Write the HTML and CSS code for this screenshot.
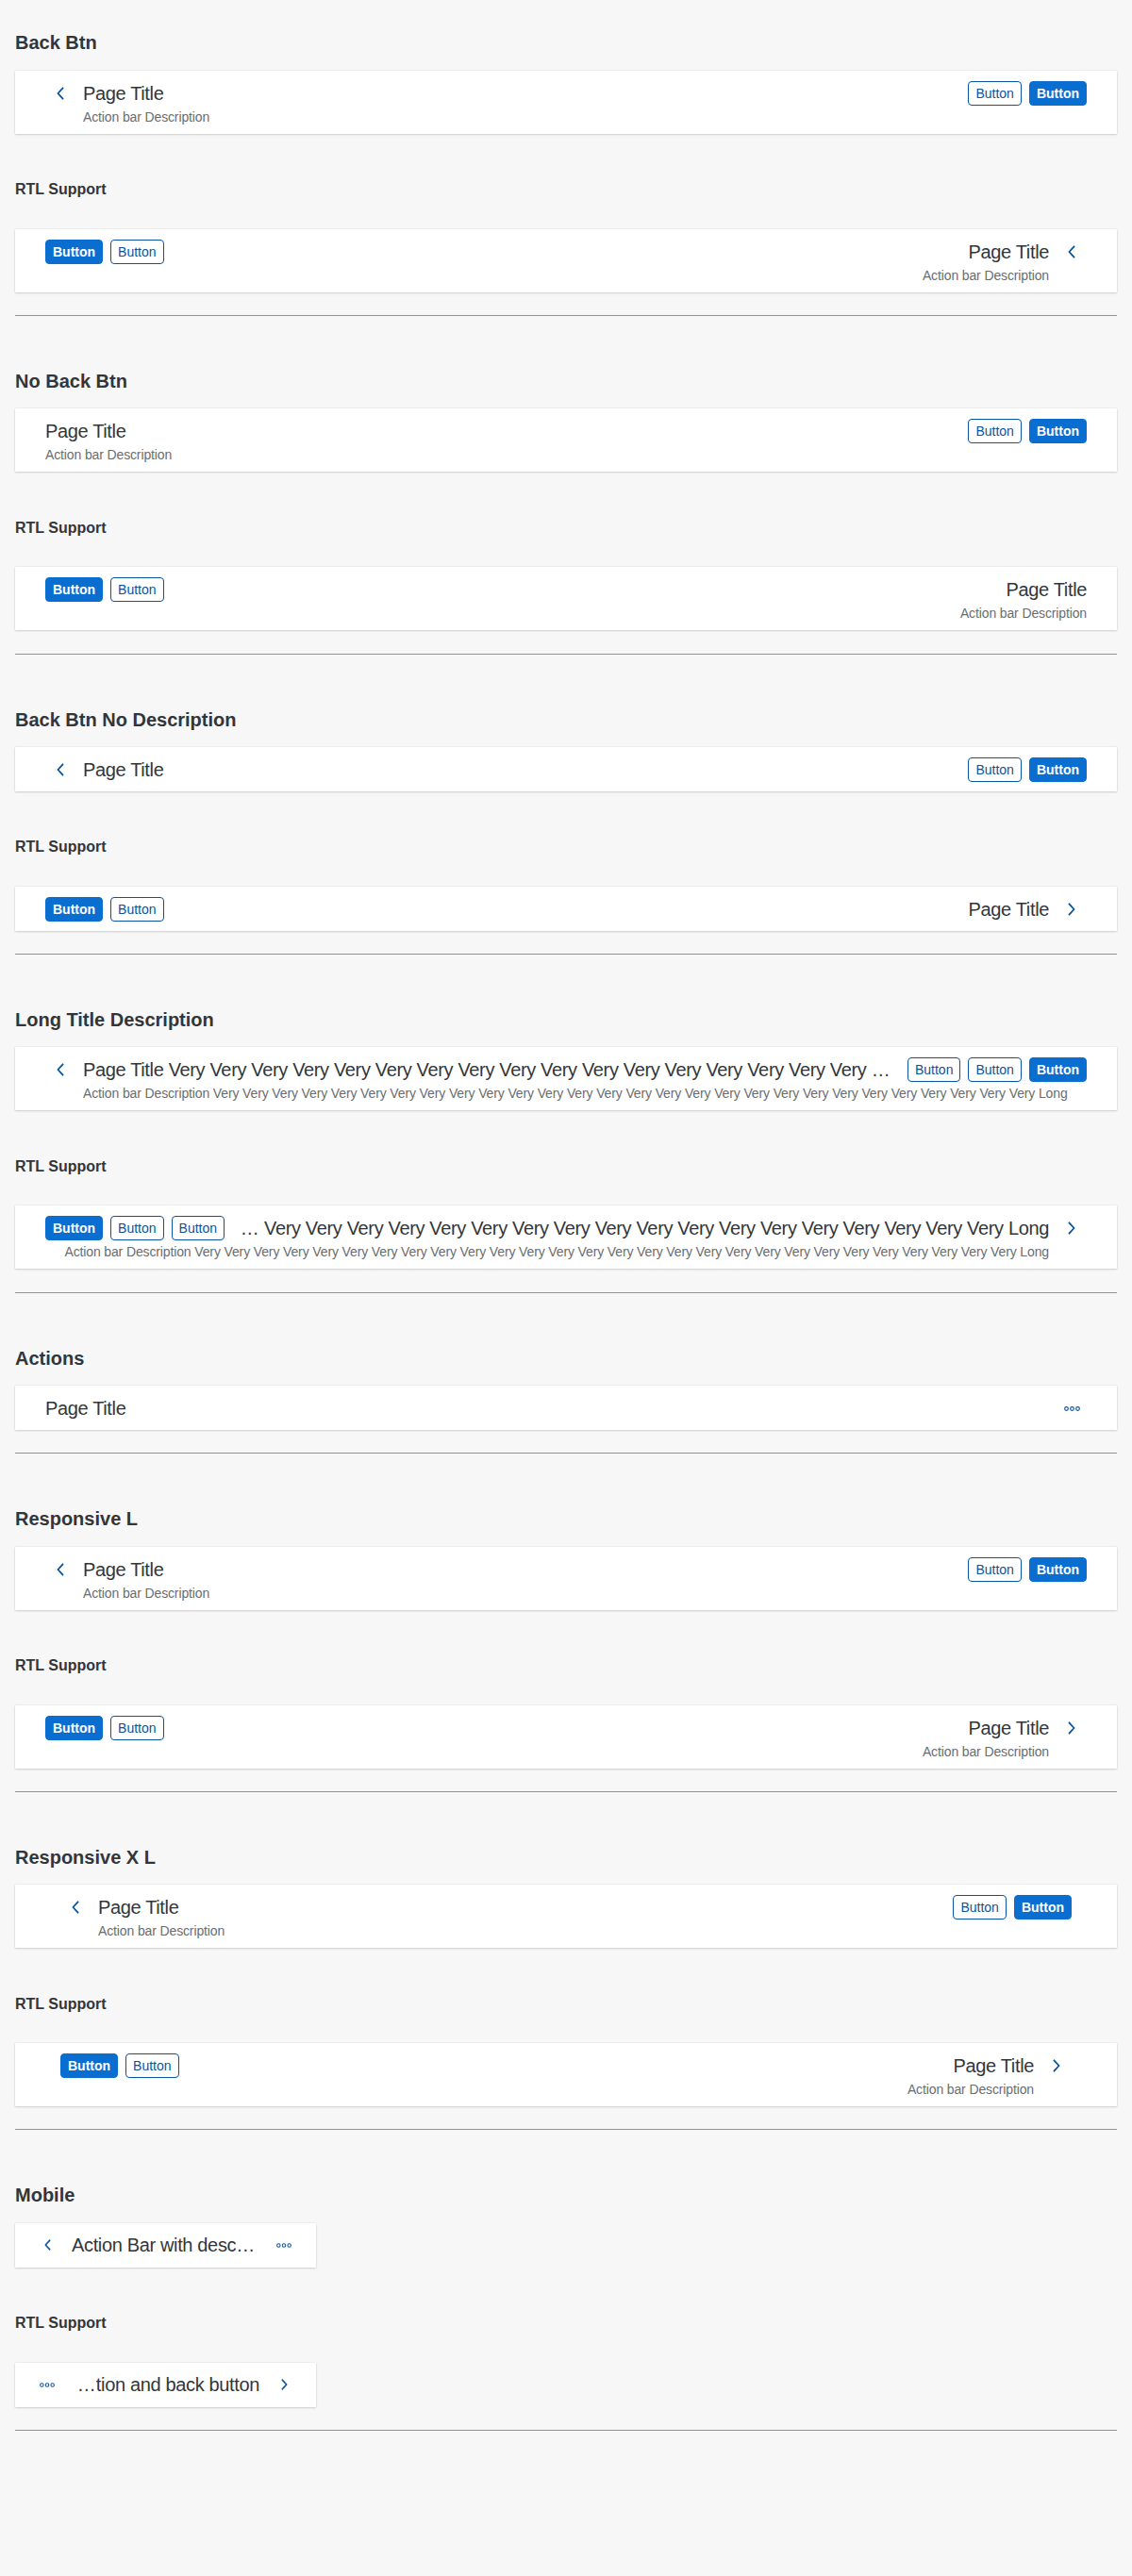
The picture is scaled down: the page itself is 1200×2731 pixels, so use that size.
FILE: index.html
```html
<!DOCTYPE html>
<html lang="en">
<head>
<meta charset="utf-8">
<title>Action Bar</title>
<link rel="stylesheet" href="styles.css">
</head>
<body>
<svg width="0" height="0" class="defs" aria-hidden="true">
  <defs>
    <symbol id="chev-left" viewBox="0 0 10 14"><polyline points="7.6,1.3 2.4,7 7.6,12.7" fill="none" stroke="currentColor" stroke-width="1.8" stroke-linecap="round" stroke-linejoin="round"/></symbol>
    <symbol id="chev-right" viewBox="0 0 10 14"><polyline points="2.4,1.3 7.6,7 2.4,12.7" fill="none" stroke="currentColor" stroke-width="1.8" stroke-linecap="round" stroke-linejoin="round"/></symbol>
    <symbol id="overflow" viewBox="0 0 17 5"><circle cx="2.5" cy="2.5" r="1.85" fill="none" stroke="currentColor" stroke-width="1.1"/><circle cx="8.5" cy="2.5" r="1.85" fill="none" stroke="currentColor" stroke-width="1.1"/><circle cx="14.5" cy="2.5" r="1.85" fill="none" stroke="currentColor" stroke-width="1.1"/></symbol>
  </defs>
</svg>

<section class="story">
  <h3 class="story-title">Back Btn</h3>
  <div class="bar">
    <div class="bar-row">
      <span class="back"><svg class="chev"><use href="#chev-left"/></svg></span>
      <span class="bar-title">Page Title</span>
      <div class="bar-actions"><span class="btn">Button</span><span class="btn btn-em">Button</span></div>
    </div>
    <div class="bar-desc indent">Action bar Description</div>
  </div>
  <h4 class="rtl-title">RTL Support</h4>
  <div class="bar" dir="rtl">
    <div class="bar-row">
      <span class="back"><svg class="chev"><use href="#chev-left"/></svg></span>
      <span class="bar-title">Page Title</span>
      <div class="bar-actions"><span class="btn">Button</span><span class="btn btn-em">Button</span></div>
    </div>
    <div class="bar-desc indent">Action bar Description</div>
  </div>
  <hr class="divider">
</section>

<section class="story">
  <h3 class="story-title">No Back Btn</h3>
  <div class="bar">
    <div class="bar-row">
      <span class="bar-title">Page Title</span>
      <div class="bar-actions"><span class="btn">Button</span><span class="btn btn-em">Button</span></div>
    </div>
    <div class="bar-desc">Action bar Description</div>
  </div>
  <h4 class="rtl-title">RTL Support</h4>
  <div class="bar" dir="rtl">
    <div class="bar-row">
      <span class="bar-title">Page Title</span>
      <div class="bar-actions"><span class="btn">Button</span><span class="btn btn-em">Button</span></div>
    </div>
    <div class="bar-desc">Action bar Description</div>
  </div>
  <hr class="divider">
</section>

<section class="story">
  <h3 class="story-title">Back Btn No Description</h3>
  <div class="bar">
    <div class="bar-row">
      <span class="back"><svg class="chev"><use href="#chev-left"/></svg></span>
      <span class="bar-title">Page Title</span>
      <div class="bar-actions"><span class="btn">Button</span><span class="btn btn-em">Button</span></div>
    </div>
  </div>
  <h4 class="rtl-title">RTL Support</h4>
  <div class="bar" dir="rtl">
    <div class="bar-row">
      <span class="back"><svg class="chev"><use href="#chev-right"/></svg></span>
      <span class="bar-title">Page Title</span>
      <div class="bar-actions"><span class="btn">Button</span><span class="btn btn-em">Button</span></div>
    </div>
  </div>
  <hr class="divider">
</section>

<section class="story">
  <h3 class="story-title">Long Title Description</h3>
  <div class="bar">
    <div class="bar-row">
      <span class="back"><svg class="chev"><use href="#chev-left"/></svg></span>
      <span class="bar-title">Page Title Very Very Very Very Very Very Very Very Very Very Very Very Very Very Very Very Very Very Very Very Very Very Very Very Very Very Very Very Long</span>
      <div class="bar-actions"><span class="btn">Button</span><span class="btn">Button</span><span class="btn btn-em">Button</span></div>
    </div>
    <div class="bar-desc indent">Action bar Description Very Very Very Very Very Very Very Very Very Very Very Very Very Very Very Very Very Very Very Very Very Very Very Very Very Very Very Very Long</div>
  </div>
  <h4 class="rtl-title">RTL Support</h4>
  <div class="bar" dir="rtl">
    <div class="bar-row">
      <span class="back"><svg class="chev"><use href="#chev-right"/></svg></span>
      <span class="bar-title">Page Title Very Very Very Very Very Very Very Very Very Very Very Very Very Very Very Very Very Very Very Very Very Very Very Very Very Very Very Very Long</span>
      <div class="bar-actions"><span class="btn">Button</span><span class="btn">Button</span><span class="btn btn-em">Button</span></div>
    </div>
    <div class="bar-desc indent">Action bar Description Very Very Very Very Very Very Very Very Very Very Very Very Very Very Very Very Very Very Very Very Very Very Very Very Very Very Very Very Long</div>
  </div>
  <hr class="divider">
</section>

<section class="story">
  <h3 class="story-title">Actions</h3>
  <div class="bar">
    <div class="bar-row">
      <span class="bar-title">Page Title</span>
      <div class="bar-actions"><span class="icon-btn"><svg class="dots"><use href="#overflow"/></svg></span></div>
    </div>
  </div>
  <hr class="divider">
</section>

<section class="story">
  <h3 class="story-title">Responsive L</h3>
  <div class="bar">
    <div class="bar-row">
      <span class="back"><svg class="chev"><use href="#chev-left"/></svg></span>
      <span class="bar-title">Page Title</span>
      <div class="bar-actions"><span class="btn">Button</span><span class="btn btn-em">Button</span></div>
    </div>
    <div class="bar-desc indent">Action bar Description</div>
  </div>
  <h4 class="rtl-title">RTL Support</h4>
  <div class="bar" dir="rtl">
    <div class="bar-row">
      <span class="back"><svg class="chev"><use href="#chev-right"/></svg></span>
      <span class="bar-title">Page Title</span>
      <div class="bar-actions"><span class="btn">Button</span><span class="btn btn-em">Button</span></div>
    </div>
    <div class="bar-desc indent">Action bar Description</div>
  </div>
  <hr class="divider">
</section>

<section class="story">
  <h3 class="story-title">Responsive X L</h3>
  <div class="bar bar-xl">
    <div class="bar-row">
      <span class="back"><svg class="chev"><use href="#chev-left"/></svg></span>
      <span class="bar-title">Page Title</span>
      <div class="bar-actions"><span class="btn">Button</span><span class="btn btn-em">Button</span></div>
    </div>
    <div class="bar-desc indent">Action bar Description</div>
  </div>
  <h4 class="rtl-title">RTL Support</h4>
  <div class="bar bar-xl" dir="rtl">
    <div class="bar-row">
      <span class="back"><svg class="chev"><use href="#chev-right"/></svg></span>
      <span class="bar-title">Page Title</span>
      <div class="bar-actions"><span class="btn">Button</span><span class="btn btn-em">Button</span></div>
    </div>
    <div class="bar-desc indent">Action bar Description</div>
  </div>
  <hr class="divider">
</section>

<section class="story">
  <h3 class="story-title">Mobile</h3>
  <div class="bar bar-mobile">
    <div class="bar-row">
      <span class="back"><svg class="chev"><use href="#chev-left"/></svg></span>
      <span class="bar-title">Action Bar with description and back button</span>
      <div class="bar-actions"><span class="icon-btn"><svg class="dots"><use href="#overflow"/></svg></span></div>
    </div>
  </div>
  <h4 class="rtl-title">RTL Support</h4>
  <div class="bar bar-mobile" dir="rtl">
    <div class="bar-row">
      <span class="back"><svg class="chev"><use href="#chev-right"/></svg></span>
      <span class="bar-title">Action Bar with description and back button</span>
      <div class="bar-actions"><span class="icon-btn"><svg class="dots"><use href="#overflow"/></svg></span></div>
    </div>
  </div>
  <hr class="divider">
</section>
</body>
</html>
```

FILE: styles.css
```css
html {
  background: #f7f7f7;
}

body {
  margin: 0;
  padding: 33.4px 16px 0;
  min-height: 2731px;
  box-sizing: border-box;
  background: #f7f7f7;
  color: #32363a;
  font-family: "Liberation Sans", Arial, sans-serif;
}

.defs {
  position: absolute;
  width: 0;
  height: 0;
  overflow: hidden;
}

.story-title {
  margin: 0 0 17.4px;
  font-size: 20px;
  line-height: 24px;
  font-weight: 700;
  color: #32363a;
}

.rtl-title {
  margin: 49.45px 0 31.55px;
  font-size: 16px;
  line-height: 20px;
  font-weight: 700;
  color: #32363a;
}

.divider {
  margin: 24.2px 0 57px;
  height: 0;
  border: 0;
  border-top: 1px solid #929292;
}

.bar {
  background: #fff;
  padding: 11px 32px 10px;
  box-shadow: 0 0 2px rgba(0, 0, 0, 0.1), 0 1px 2px rgba(0, 0, 0, 0.14);
}

.bar-xl {
  padding-left: 48px;
  padding-right: 48px;
}

.bar-row {
  display: flex;
  align-items: center;
  height: 26px;
}

.back {
  flex: none;
  width: 32px;
  height: 26px;
  margin-inline-end: 8px;
  display: flex;
  align-items: center;
  justify-content: center;
  color: #0854a0;
}

.chev {
  width: 10px;
  height: 14px;
  display: block;
}

.bar-title {
  flex: 1 1 auto;
  min-width: 0;
  font-size: 20px;
  line-height: 26px;
  letter-spacing: -0.35px;
  color: #32363a;
  white-space: nowrap;
  overflow: hidden;
  text-overflow: ellipsis;
}

.bar-actions {
  flex: none;
  display: flex;
  gap: 8px;
  margin-inline-start: 12px;
}

.btn {
  display: inline-block;
  box-sizing: border-box;
  height: 26px;
  padding: 0 7px;
  border: 1px solid #0854a0;
  border-radius: 4px;
  background: #fff;
  color: #0854a0;
  font-size: 14px;
  line-height: 24px;
}

.btn-em {
  background: #0a6ed1;
  border-color: #0a6ed1;
  color: #fff;
  font-weight: 700;
}

.icon-btn {
  width: 32px;
  height: 26px;
  display: flex;
  align-items: center;
  justify-content: center;
  color: #0854a0;
}

.dots {
  width: 17px;
  height: 5px;
  display: block;
}

.bar-desc {
  margin-top: 4px;
  font-size: 14px;
  line-height: 16px;
  letter-spacing: -0.13px;
  color: #6a6d70;
  white-space: nowrap;
}

.bar-desc.indent {
  padding-inline-start: 40px;
}

.bar-mobile {
  width: 319px;
  box-sizing: border-box;
  padding: 5.5px 16px;
}

.bar-mobile .bar-row {
  height: 36px;
}

.bar-mobile .back {
  width: 36px;
  height: 36px;
}

.bar-mobile .chev {
  width: 9px;
  height: 12px;
}

.bar-mobile .bar-actions {
  margin-inline-start: 8px;
}

.bar-mobile .icon-btn {
  width: 36px;
  height: 36px;
}

.bar-mobile .dots {
  width: 16px;
  height: 5px;
}
```
